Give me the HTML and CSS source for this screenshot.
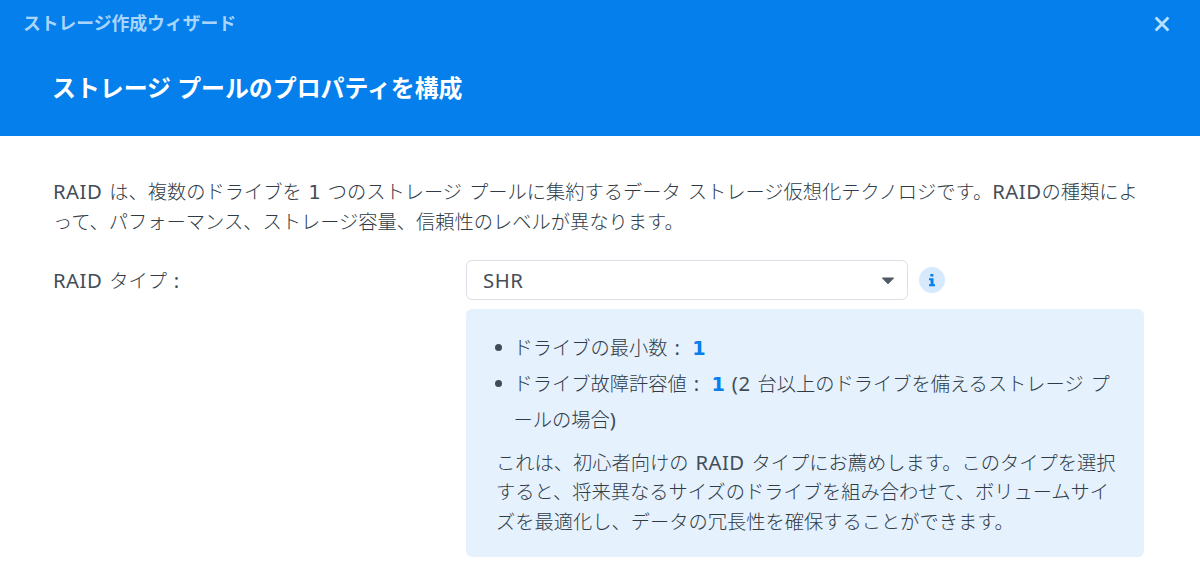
FILE: index.html
```html
<!DOCTYPE html>
<html lang="ja">
<head>
  <meta charset="UTF-8">
  <meta name="viewport" content="width=device-width, initial-scale=1">
  <title>ストレージ作成ウィザード</title>
  <link rel="stylesheet" href="styles.css">
</head>
<body>

<div class="wizard">
  <header class="header">
    <div class="titlebar">
      <span class="window-title">ストレージ作成ウィザード</span>
      <button class="close" aria-label="閉じる">
        <svg width="16" height="16" viewBox="0 0 16 16"><path d="M1.6 1.6l12.8 12.8M14.4 1.6L1.6 14.4"/></svg>
      </button>
    </div>
    <h1>ストレージ プールのプロパティを構成</h1>
  </header>

  <main class="content">
    <p class="intro"><span class="en">RAID</span> は、複数のドライブを <span class="num">1</span> つのストレージ プールに集約するデータ ストレージ仮想化テクノロジです。<span class="en">RAID</span>の種類によ<br>って、パフォーマンス、ストレージ容量、信頼性のレベルが異なります。</p>

    <div class="field">
      <span class="label"><span class="en">RAID</span> タイプ <span class="en">:</span></span>
      <div class="control">
        <div class="select-row">
          <div class="select">
            <span class="en">SHR</span>
            <svg width="14" height="8" viewBox="0 0 14 8"><path d="M1.4 1h11.2L7 6.8z"/></svg>
          </div>
          <span class="info">
            <svg width="26" height="26" viewBox="0 0 26 26"><circle cx="13" cy="13" r="13"/><path d="M11.4 7h3v2.6h-3zM10 11.3h4.5v5.9H16v2h-6v-2h1.6v-3.9H10z"/></svg>
          </span>
        </div>
        <div class="panel">
          <ul>
            <li>ドライブの最小数 <span class="en">:</span> <b>1</b></li>
            <li>ドライブ故障許容値 <span class="en">:</span> <b>1</b> <span class="en">(2</span> 台以上のドライブを備えるストレージ プ<br>ールの場合<span class="en">)</span></li>
          </ul>
          <p>これは、初心者向けの <span class="en">RAID</span> タイプにお薦めします。このタイプを選択<br>すると、将来異なるサイズのドライブを組み合わせて、ボリュームサイ<br>ズを最適化し、データの冗長性を確保することができます。</p>
        </div>
      </div>
    </div>
  </main>
</div>

</body>
</html>
```

FILE: styles.css
```css
* { box-sizing: border-box; }
body {
  margin: 0;
  background: #fff;
  color: #303b46;
  font-family: "Noto Sans", "Noto Sans CJK JP", sans-serif;
  font-size: 19.25px;
  font-weight: 300;
  line-height: 29.5px;
  white-space: nowrap;
  word-spacing: 1.9px;
}
.wizard {
  height: 569px;
  overflow: hidden;
}
.header {
  height: 135.5px;
  background: #057feb;
}
.titlebar {
  display: flex;
  justify-content: space-between;
  align-items: center;
  height: 47px;
  padding: 0 30px 0 23px;
}
.window-title {
  color: #a9d5fb;
  font-size: 17.8px;
  font-weight: 700;
}
.close {
  display: flex;
  padding: 0;
  border: none;
  background: none;
  cursor: pointer;
}
.close path {
  stroke: #b9e0ff;
  stroke-width: 2.8;
}
h1 {
  margin: 0;
  padding: 24px 52px 0;
  color: #fff;
  font-size: 23.9px;
  font-weight: 700;
  line-height: 34px;
  word-spacing: 0;
}
.content {
  padding: 41.5px 53px 0;
}
.intro {
  margin: 0 0 23.5px;
}
.en {
  color: #434d57;
  font-size: 20.3px;
  font-weight: 400;
  letter-spacing: 0.5px;
  line-height: 1;
}
.num {
  color: #434d57;
  font-family: "DejaVu Sans", sans-serif;
  font-weight: 400;
  line-height: 1;
}
.field {
  display: flex;
}
.label {
  width: 413px;
  line-height: 41px;
}
.select-row {
  display: flex;
  align-items: center;
  gap: 10.5px;
}
.select {
  display: flex;
  justify-content: space-between;
  align-items: center;
  width: 442px;
  height: 40px;
  padding: 2px 12px 0 16px;
  border: 1px solid #dbe0e6;
  border-radius: 6px;
}
.select path {
  fill: #505a64;
  stroke: #505a64;
  stroke-linejoin: round;
}
.info {
  display: flex;
}
.info circle {
  fill: #d7eafd;
}
.info path {
  fill: #057feb;
}
.panel {
  width: 678px;
  height: 247.5px;
  margin-top: 9.5px;
  padding: 21px 30px 0;
  border-radius: 6px;
  background: #e5f1fd;
}
.panel ul {
  margin: 0 0 10.5px;
  padding-left: 17.5px;
  line-height: 35.8px;
  list-style: none;
}
.panel li::before {
  content: "";
  float: left;
  width: 7px;
  height: 7px;
  margin: 14px 0 0 -18.5px;
  border-radius: 50%;
  background: #414b55;
}
.panel b {
  margin-left: 5px;
  color: #057feb;
  font-family: "DejaVu Sans", sans-serif;
  font-weight: 700;
  line-height: 1;
}
.panel p {
  margin: 0;
}
```
